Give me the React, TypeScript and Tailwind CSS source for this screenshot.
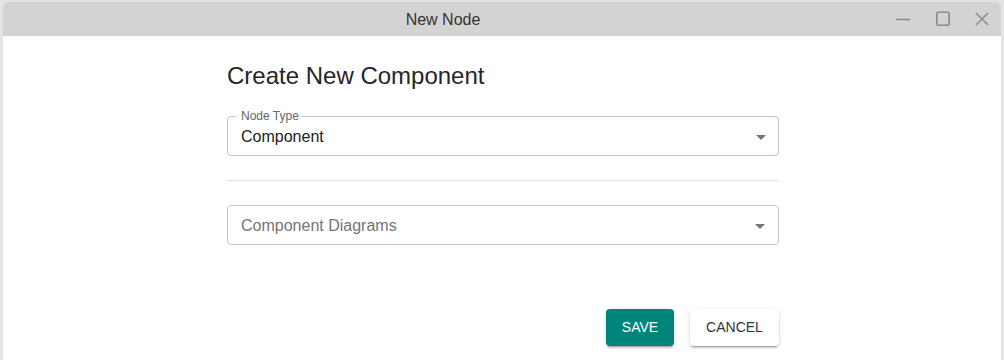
import React from "react";

function Caret() {
  return (
    <svg width="24" height="24" viewBox="0 0 24 24" className="absolute right-[6px] top-1/2 -translate-y-1/2 mt-[1px]" fill="rgba(0,0,0,0.54)">
      <path d="M7 10l5 5 5-5z" />
    </svg>
  );
}

export default function App() {
  return (
    <div className="w-[1004px] h-[360px] bg-[#e4e4e4] px-[3px] pt-[2px] overflow-hidden" style={{ fontFamily: '"Liberation Sans", Arial, sans-serif' }}>
      <div className="h-full flex flex-col rounded-t-[6px] overflow-hidden">
        <div className="h-[34px] bg-[#d3d3d3] flex items-center shrink-0">
          <div className="flex-1 text-center text-[16px] text-[#333] pt-[1px]">New Node</div>
          <div className="flex items-center w-[118px] h-full">
            <div className="w-10 flex justify-center">
              <svg width="16" height="16" viewBox="0 0 16 16"><path d="M1 8.5h14" stroke="#8c8c8c" strokeWidth="1.6" /></svg>
            </div>
            <div className="w-10 flex justify-center">
              <svg width="16" height="16" viewBox="0 0 16 16"><rect x="1.8" y="1.3" width="12.4" height="13" rx="1.2" fill="none" stroke="#8c8c8c" strokeWidth="1.6" /></svg>
            </div>
            <div className="w-[38px] flex justify-center">
              <svg width="16" height="16" viewBox="0 0 16 16"><path d="M2 2l12 12M14 2L2 14" stroke="#8c8c8c" strokeWidth="1.6" /></svg>
            </div>
          </div>
        </div>
        <div className="flex-1 bg-white">
          <div className="w-[552px] ml-[224px] pt-[24px]">
            <h1 className="text-[24px] leading-[32px] text-[#262626] font-normal">Create New Component</h1>
            <div className="relative mt-[24px] h-[40px]">
              <fieldset className="absolute inset-0 border border-[#c4c4c4] rounded-[4px] px-[8px] -top-[5px] m-0">
                <legend className="text-[12px] leading-[10px] px-[4px] text-transparent">Node Type</legend>
              </fieldset>
              <span className="absolute left-[14px] -top-[7px] text-[12px] leading-[14px] text-[#666]">Node Type</span>
              <div className="absolute left-[14px] top-[1px] h-full flex items-center text-[16px] text-[#212121]">Component</div>
              <Caret />
            </div>
            <div className="mt-[24px] h-px bg-[#e0e0e0]" />
            <div className="relative mt-[24px] h-[40px] border border-[#c4c4c4] rounded-[4px]">
              <div className="absolute left-[13px] top-[1px] h-full flex items-center text-[16px] text-[#757575]">Component Diagrams</div>
              <Caret />
            </div>
            <div className="mt-[64px] flex justify-end gap-4">
              <button className="w-[68px] h-[37px] rounded-[4px] bg-[#00857a] text-white text-[14px] font-medium uppercase shadow-[0_3px_1px_-2px_rgba(0,0,0,0.2),0_2px_2px_0_rgba(0,0,0,0.14),0_1px_5px_0_rgba(0,0,0,0.12)]">Save</button>
              <button className="w-[89px] h-[37px] rounded-[4px] bg-white text-[#333] text-[14px] font-medium uppercase shadow-[0_3px_1px_-2px_rgba(0,0,0,0.2),0_2px_2px_0_rgba(0,0,0,0.14),0_1px_5px_0_rgba(0,0,0,0.12)]">Cancel</button>
            </div>
          </div>
        </div>
      </div>
    </div>
  );
}
